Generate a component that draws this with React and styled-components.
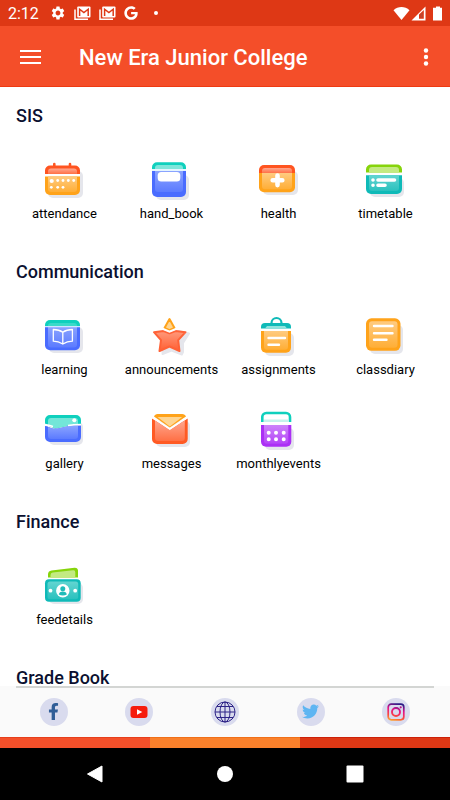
import styled, { createGlobalStyle } from "styled-components";

import { MdSettings } from "react-icons/md";
import { FaFacebookF, FaGoogle, FaTwitter } from "react-icons/fa";

const GlobalStyle = createGlobalStyle`
  * {
    box-sizing: border-box;
  }

  body {
    margin: 0;
    background: #fff;
    font-family: Roboto, "Noto Sans", sans-serif;
  }
`;

const Screen = styled.div`
  display: flex;
  flex-direction: column;
  height: 100vh;
  background: #fff;
`;

const StatusBar = styled.div`
  display: flex;
  align-items: center;
  justify-content: space-between;
  flex-shrink: 0;
  height: 26px;
  padding: 0 7px 0 8px;
  color: #fff;
  background: #de3815;
`;

const StatusGroup = styled.div`
  display: flex;
  align-items: center;
  gap: ${({ $gap }) => $gap}px;

  svg {
    display: block;
  }
`;

const Time = styled.span`
  font-size: 16px;
  line-height: 20px;
  margin-right: 3px;
  padding-top: 2px;
`;

const Dot = styled.span`
  width: 4px;
  height: 4px;
  margin-left: 8px;
  border-radius: 50%;
  background: #fff;
`;

const AppBar = styled.header`
  display: flex;
  align-items: center;
  flex-shrink: 0;
  height: 61px;
  padding: 2px 14px 0 16px;
  color: #fff;
  background: #f44e29;
  border-bottom: 1px solid #ee3a12;
`;

const IconButton = styled.button`
  display: flex;
  padding: 4px;
  color: inherit;
  background: none;
  border: none;
  cursor: pointer;
`;

const AppTitle = styled.h1`
  flex: 1;
  margin: 0 0 0 34px;
  padding-top: 2px;
  font-size: 22px;
  font-weight: 500;
  line-height: 28px;
`;

const Content = styled.main`
  flex: 1;
  min-height: 0;
  padding-top: 20px;
  overflow-y: auto;
  scrollbar-width: none;
`;

const Section = styled.section`
  margin-bottom: 40px;
`;

const SectionTitle = styled.h2`
  margin: 0 0 34px;
  padding: 0 16px;
  font-size: 18px;
  font-weight: 500;
  line-height: 18px;
  color: #0b1030;
`;

const Grid = styled.div`
  display: grid;
  grid-template-columns: repeat(4, minmax(0, 1fr));
  row-gap: 30px;
  padding: 0 11px;
`;

const Tile = styled.a`
  display: flex;
  flex-direction: column;
  align-items: center;
  gap: 2px;
  font-size: 13px;
  line-height: 18px;
  color: #000;
  text-decoration: none;
`;

const Footer = styled.footer`
  flex-shrink: 0;
  background: #fafafa;
`;

const Divider = styled.hr`
  height: 2px;
  margin: 0 16px;
  border: none;
  background: #d3d5d3;
`;

const SocialRow = styled.div`
  display: grid;
  grid-template-columns: repeat(5, 1fr);
  justify-items: center;
  align-items: center;
  height: 49px;
  padding: 0 11px 2px;
`;

const SocialLink = styled.a`
  display: flex;
  align-items: center;
  justify-content: center;
  width: 28px;
  height: 28px;
  border-radius: 50%;
  color: ${({ $color }) => $color};
  background: #d9dbee;
`;

const Stripes = styled.div`
  display: flex;
  height: 11px;
`;

const Stripe = styled.span`
  flex: 1;
  background: ${({ $color }) => $color};
  border-top: 1px solid ${({ $edge }) => $edge};
`;

const NavBar = styled.nav`
  display: grid;
  grid-template-columns: repeat(3, 1fr);
  justify-items: center;
  align-items: center;
  flex-shrink: 0;
  height: 52px;
  padding: 0 30px;
  color: #fff;
  background: #000;
`;

const Shadow = (props) => <rect rx="5" fill="#e5e6ec" {...props} />;

const Line = (props) => (
  <path fill="none" stroke="#fff" strokeWidth="2.4" strokeLinecap="round" {...props} />
);

const icons = {
  attendance: (
    <>
      <Shadow x="6" y="12" width="35" height="27" />
      <path d="M12.3 5v4M28 5v4" stroke="#ff5722" strokeWidth="2.6" strokeLinecap="round" />
      <path d="M3 15v-3.500a5 5 0 0 1 5-5h25a5 5 0 0 1 5 5V15z" fill="#ff5420" />
      <path d="M6 15v-2.500a3 3 0 0 1 3-3h23a3 3 0 0 1 3 3V15z" fill="url(#redSoft)" />
      <path d="M3 15h35v2.500H3z" fill="#fff" />
      <path d="M3 17.500h35V31a5 5 0 0 1-5 5H8a5 5 0 0 1-5-5z" fill="#ffa31a" />
      <path d="M6 17.500h29V30a3 3 0 0 1-3 3H9a3 3 0 0 1-3-3z" fill="url(#amberSoft)" />
      <g fill="#fff">
        <circle cx="9.700" cy="22" r="2.100" />
        <circle cx="15.700" cy="21.500" r="1.400" />
        <circle cx="21" cy="21.500" r="1.400" />
        <circle cx="26.300" cy="21.500" r="1.400" />
        <circle cx="31.700" cy="21.500" r="1.400" />
        <circle cx="9.300" cy="28.300" r="1.400" />
        <circle cx="15.700" cy="28.300" r="1.400" />
        <circle cx="21" cy="28.300" r="1.400" />
      </g>
    </>
  ),
  hand_book: (
    <>
      <Shadow x="7" y="16" width="33" height="25" />
      <path d="M3 10V8.300a5 5 0 0 1 5-5h24a5 5 0 0 1 5 5V10z" fill="#0fd0bd" />
      <path d="M6 10V9a3 3 0 0 1 3-3h22a3 3 0 0 1 3 3v1z" fill="#7ee6db" />
      <path d="M3 10h34v2H3z" fill="#e4f5ff" />
      <path d="M3 12h34v21a5 5 0 0 1-5 5H8a5 5 0 0 1-5-5z" fill="#4a6cff" />
      <path d="M6 12h28v18a3 3 0 0 1-3 3H9a3 3 0 0 1-3-3z" fill="url(#blueSoft)" />
      <rect x="8.700" y="13" width="22.600" height="9.600" rx="3.500" fill="#fff" />
    </>
  ),
  health: (
    <>
      <Shadow x="7" y="12" width="35" height="24" />
      <path d="M3 15v-4a5 5 0 0 1 5-5h26a5 5 0 0 1 5 5v4z" fill="#ff5420" />
      <path d="M3 14h36v14.300a5 5 0 0 1-5 5H8a5 5 0 0 1-5-5z" fill="#ffa31a" />
      <path d="M6 14v-2a3 3 0 0 1 3-3h24a3 3 0 0 1 3 3v2z" fill="url(#redSoft)" />
      <path d="M6 14h30v13.300a3 3 0 0 1-3 3H9a3 3 0 0 1-3-3z" fill="url(#amberSoft)" />
      <path d="M21.500 16.500v9.600M16.700 21.300h9.600" stroke="#fff" strokeWidth="4.600" strokeLinecap="round" />
    </>
  ),
  timetable: (
    <>
      <Shadow x="7" y="19" width="34" height="19" />
      <path d="M3 13.500v-3a5 5 0 0 1 5-5h26a5 5 0 0 1 5 5v3z" fill="#86d40b" />
      <path d="M6 13.500V11a3 3 0 0 1 3-3h24a3 3 0 0 1 3 3v2.500z" fill="#c3ea82" />
      <path d="M3 16.300h36V30a5 5 0 0 1-5 5H8a5 5 0 0 1-5-5z" fill="#0fbab8" />
      <path d="M6 16.300h30V29a3 3 0 0 1-3 3H9a3 3 0 0 1-3-3z" fill="url(#tealSoft)" />
      <Line d="M10 21h.01M10 26.300h.01M15 21h16.500M15 26.300h7" strokeWidth="3.600" />
    </>
  ),
  learning: (
    <>
      <Shadow x="7" y="12" width="34" height="26" />
      <path d="M3 11v-1a5 5 0 0 1 5-5h25a5 5 0 0 1 5 5v1z" fill="#0fd0bd" />
      <path d="M6 11a3 3 0 0 1 3-3h23a3 3 0 0 1 3 3z" fill="#8deee0" opacity=".35" />
      <path d="M3 11h35v19.300a5 5 0 0 1-5 5H8a5 5 0 0 1-5-5z" fill="#4a6cff" />
      <path d="M6 11.500h29v18a3 3 0 0 1-3 3H9a3 3 0 0 1-3-3z" fill="url(#blueSoft)" />
      <path d="M3 11h35v1.300H3z" fill="#cfe5ff" />
      <path
        d="M20.800 17.200C18 15.200 14.500 14.500 11.300 14.500v11.700c3.500 0 6.700 1 9.500 2.800 2.800-1.800 6-2.800 9.600-2.800V14.500c-3.300 0-6.800.7-9.600 2.700zV29"
        fill="none"
        stroke="#fff"
        strokeWidth="1.300"
        strokeLinejoin="round"
      />
    </>
  ),
  announcements: (
    <>
      <path
        d="M22.500 35.500 13.500 39 14 31 29 16 40 18.500 34 28v9l-1.200 2.500z"
        fill="#e5e6ec"
        stroke="#e5e6ec"
        strokeWidth="2"
        strokeLinejoin="round"
      />
      <path
        d="m20.500 4 5 9-5 2.200-5-2.200z"
        fill="#ffd591"
        stroke="#ffa31a"
        strokeWidth="2"
        strokeLinejoin="round"
      />
      <path
        d="M5 17.200 14.500 16l6 2.300 6-2.300 10 1.200-7.300 8 1.300 10.800-10-4.500-10 4.500L12 25.200z"
        fill="url(#starFill)"
        stroke="#ff6237"
        strokeWidth="2"
        strokeLinejoin="round"
      />
      <path d="m13 13.500 7.500 3.200 7.500-3.200" fill="none" stroke="#fff" strokeWidth="2" />
    </>
  ),
  assignments: (
    <>
      <Shadow x="9" y="18" width="29" height="23" />
      <path d="M15.500 8.500V8a5 5 0 0 1 10 0v.5" fill="none" stroke="#0fbab8" strokeWidth="2.200" />
      <path d="M5 13.500V12a4 4 0 0 1 4-4h22a4 4 0 0 1 4 4v1.500z" fill="#0fbab8" />
      <path d="M9 13.500 11 11h18l2 2.500z" fill="#8fe3dd" />
      <path d="M5 16h30v16.700a5 5 0 0 1-5 5H10a5 5 0 0 1-5-5z" fill="#ffa31a" />
      <path d="M8 16h24v15.700a3 3 0 0 1-3 3H11a3 3 0 0 1-3-3z" fill="url(#amberSoft)" />
      <Line d="M12.500 23h16.500M12.500 29.700h10.500" />
    </>
  ),
  classdiary: (
    <>
      <Shadow x="7" y="10" width="33" height="29" />
      <rect x="3" y="3.300" width="34.500" height="32.500" rx="5.500" fill="#ffa31a" />
      <rect x="6" y="6.300" width="28.500" height="26.500" rx="3" fill="url(#amberSoft)" />
      <Line d="M11 11h18.500M11 18.300h18.500M11 24.700h12.500" />
    </>
  ),
  gallery: (
    <>
      <Shadow x="7" y="13" width="34" height="23" />
      <path d="M3 14.500V11a5 5 0 0 1 5-5h26a5 5 0 0 1 5 5v4l-10 1-16 3.500-6-3z" fill="#0fd0bd" />
      <path d="M6 16v-4a3 3 0 0 1 3-3h24a3 3 0 0 1 3 3v3l-7 1-16 3.500z" fill="#73e6d8" />
      <path d="M3 17c3 0 5 2.300 9 2.800 5 .3 9-1.800 14-2.600 4-.7 8-.7 13-.7V28a5 5 0 0 1-5 5H8a5 5 0 0 1-5-5z" fill="#4a6cff" />
      <path d="M6 18c2 .8 4 1.700 6 1.800 5 .3 9-1.800 14-2.600 3-.5 6-.7 10-.7V27a3 3 0 0 1-3 3H9a3 3 0 0 1-3-3z" fill="url(#blueSoft)" />
      <path d="M3 15.800c3 .2 6 1 8 1.700M26 16.400c4-.8 8-1 13-1" fill="none" stroke="#fff" strokeWidth="1.500" />
      <circle cx="32.300" cy="11.300" r="2" fill="#fff" />
    </>
  ),
  messages: (
    <>
      <Shadow x="7" y="12" width="34" height="26" />
      <path d="M3 9.500 20.800 21 38.700 9.500V30a5 5 0 0 1-5 5H8a5 5 0 0 1-5-5z" fill="#ff5a24" />
      <path d="M6 11.500 20.800 21l15-9.500V29a3 3 0 0 1-3 3H9a3 3 0 0 1-3-3z" fill="url(#redSoft)" />
      <path d="M5 7.500C5.500 6 7 5 8.500 5h24.700c1.800 0 3.200 1 3.800 2.500L20.800 18.500z" fill="#ffa31a" />
      <path d="M8.500 8h24.700L20.800 17.500z" fill="#ffd591" />
      <path d="M3.500 8.300 20.800 20 38.200 8.300" fill="none" stroke="#fff" strokeWidth="1.700" />
    </>
  ),
  monthlyevents: (
    <>
      <Shadow x="9" y="19" width="29" height="22" />
      <path
        d="M6.300 13V8a4 4 0 0 1 4-4H30a4 4 0 0 1 4 4v5"
        fill="#fff"
        stroke="#0fd0bd"
        strokeWidth="2.600"
      />
      <path d="M8 10.500h24.500V13H8z" fill="#c4f3ec" />
      <path d="M5 16h30.300v16.700a5 5 0 0 1-5 5H10a5 5 0 0 1-5-5z" fill="#ab30f5" />
      <path d="M8 16h24.300v15.700a3 3 0 0 1-3 3H11a3 3 0 0 1-3-3z" fill="url(#purpleSoft)" />
      <Line d="M12.700 23.700h.01M20 23.700h.01M27.700 23.700h.01M12.700 30.300h.01M20 30.300h.01M27.700 30.300h.01" strokeWidth="4" />
    </>
  ),
  feedetails: (
    <>
      <Shadow x="7" y="18" width="34" height="21" />
      <path d="M6 12.500V9.500a4 4 0 0 1 3.500-4l23-2.800A3 3 0 0 1 36 5.500v7z" fill="#86d40b" />
      <path d="M8.500 12.500V10a2.500 2.500 0 0 1 2.200-2.400L31 5.200a2 2 0 0 1 2.300 2v5.300z" fill="#c3ea82" />
      <rect x="3" y="14.300" width="35.700" height="22.400" rx="4" fill="#0fbab8" />
      <rect x="5.500" y="16.500" width="30.700" height="17.700" rx="2.500" fill="url(#tealSoft)" />
      <circle cx="20.800" cy="25.700" r="6.700" fill="#fff" />
      <circle cx="20.800" cy="23.700" r="2.500" fill="#20bcb9" />
      <path d="M16.800 29.500c.3-2 1.700-3 4-3s3.700 1 4 3c-2.400 1.300-5.600 1.300-8 0z" fill="#20bcb9" />
      <circle cx="8.500" cy="25.700" r="1.900" fill="#fff" />
      <circle cx="33.200" cy="25.700" r="1.900" fill="#fff" />
    </>
  ),
};

const gradients = [
  ["redSoft", "#ffa78f", "#ff7045"],
  ["amberSoft", "#ffcb80", "#ffae36"],
  ["blueSoft", "#8ba4ff", "#5c7bff"],
  ["tealSoft", "#62d5d1", "#2bc1be"],
  ["purpleSoft", "#cd83fa", "#b445f7"],
  ["starFill", "#ff9a7c", "#ff5f33"],
];

const HiddenSvg = styled.svg`
  position: absolute;
`;

const GradientDefs = () => (
  <HiddenSvg width="0" height="0" aria-hidden="true">
    <defs>
      {gradients.map(([id, from, to]) => (
        <linearGradient key={id} id={id} x1="0" y1="0" x2="0" y2="1">
          <stop offset="0" stopColor={from} />
          <stop offset="1" stopColor={to} />
        </linearGradient>
      ))}
      <linearGradient id="insta" gradientUnits="userSpaceOnUse" x1="3" y1="18" x2="8" y2="0">
        <stop offset="0" stopColor="#ffb52e" />
        <stop offset="0.3" stopColor="#fb4a3c" />
        <stop offset="0.65" stopColor="#e6128a" />
        <stop offset="1" stopColor="#2b1a86" />
      </linearGradient>
    </defs>
  </HiddenSvg>
);

const MailStack = () => (
  <svg width="17" height="15" viewBox="0 0 17 15" fill="none">
    <path d="M1 3.500v9.800h13" stroke="#fff" strokeWidth="1.500" />
    <rect x="3.200" y="0.500" width="13.300" height="11" rx="1" fill="#fff" />
    <path d="M5.600 10V3.200l4.300 3.300 4.300-3.300V10" stroke="#de3815" strokeWidth="1.500" />
  </svg>
);

const sections = [
  { title: "SIS", items: ["attendance", "hand_book", "health", "timetable"] },
  {
    title: "Communication",
    items: [
      "learning",
      "announcements",
      "assignments",
      "classdiary",
      "gallery",
      "messages",
      "monthlyevents",
    ],
  },
  { title: "Finance", items: ["feedetails"] },
  { title: "Grade Book", items: [] },
];

const socials = [
  { name: "Facebook", color: "#2f5d97", icon: <FaFacebookF size={17} /> },
  {
    name: "YouTube",
    color: "#f61c0d",
    icon: (
      <svg width="18" height="14" viewBox="0 0 18 14">
        <rect x="0.500" y="1" width="17" height="12" rx="3" fill="currentColor" />
        <path d="M7 4.200v5.600L12.300 7z" fill="#fff" />
      </svg>
    ),
  },
  {
    name: "Website",
    color: "#2d2387",
    icon: (
      <svg width="22" height="22" viewBox="0 0 22 22" fill="none" stroke="currentColor">
        <circle cx="11" cy="11" r="10" />
        <ellipse cx="11" cy="11" rx="5" ry="10" />
        <path d="M11 1v20M1 11h20M2.800 5.500h16.400M2.800 16.500h16.400" />
      </svg>
    ),
  },
  { name: "Twitter", color: "#5eb5f2", icon: <FaTwitter size={17} /> },
  {
    name: "Instagram",
    color: "#d8127d",
    icon: (
      <svg width="18" height="18" viewBox="0 0 18 18" fill="none" stroke="url(#insta)">
        <rect x="1.200" y="1.200" width="15.600" height="15.600" rx="3" strokeWidth="1.700" />
        <circle cx="9" cy="9" r="4" strokeWidth="1.900" />
        <circle cx="13.700" cy="4.300" r="1.100" fill="#b51a86" stroke="none" />
      </svg>
    ),
  },
];

const App = () => {
  return (
    <Screen>
      <GlobalStyle />
      <GradientDefs />
      <StatusBar>
        <StatusGroup $gap={8}>
          <Time>2:12</Time>
          <MdSettings size={16} />
          <MailStack />
          <MailStack />
          <FaGoogle size={14} />
          <Dot />
        </StatusGroup>
        <StatusGroup $gap={1}>
          <svg width="17" height="15" viewBox="0 0 17 15">
            <path d="M.5 4.200C5-.2 12-.2 16.500 4.200L8.500 14z" fill="#fff" />
          </svg>
          <svg width="15" height="15" viewBox="0 0 15 15">
            <path d="M14.500.5v14H.5z" fill="#fff" />
            <path d="M8 8.500 12.800 4v8.800H8z" fill="#de3815" />
            <path d="M9.500 8.500 11.500 6.500v5h-2z" fill="#b64a38" />
          </svg>
          <svg width="16" height="15" viewBox="0 0 16 15">
            <path d="M7 1.800h2V.5h4v1.300h2V14.500H6V1.800z" fill="#fff" />
          </svg>
        </StatusGroup>
      </StatusBar>
      <AppBar>
        <IconButton aria-label="Open menu">
          <svg width="21" height="16" viewBox="0 0 21 16">
            <path d="M0 2h21M0 8h21M0 14h21" stroke="#fff" strokeWidth="2" />
          </svg>
        </IconButton>
        <AppTitle>New Era Junior College</AppTitle>
        <IconButton aria-label="More options">
          <svg width="16" height="20" viewBox="0 0 16 20" fill="#fff">
            <circle cx="10" cy="3.500" r="2.200" />
            <circle cx="10" cy="10" r="2.200" />
            <circle cx="10" cy="16.500" r="2.200" />
          </svg>
        </IconButton>
      </AppBar>
      <Content>
        {sections.map(({ title, items }) => (
          <Section key={title}>
            <SectionTitle>{title}</SectionTitle>
            <Grid>
              {items.map((item) => (
                <Tile key={item} href={`#${item}`}>
                  <svg width="44" height="44" viewBox="1 0 44 44" aria-hidden="true">
                    {icons[item]}
                  </svg>
                  {item}
                </Tile>
              ))}
            </Grid>
          </Section>
        ))}
      </Content>
      <Footer>
        <Divider />
        <SocialRow>
          {socials.map(({ name, color, icon }) => (
            <SocialLink key={name} href={`#${name}`} aria-label={name} $color={color}>
              {icon}
            </SocialLink>
          ))}
        </SocialRow>
        <Stripes>
          <Stripe $color="#f4502a" $edge="#e63f1c" />
          <Stripe $color="#fa812b" $edge="#f07019" />
          <Stripe $color="#de3815" $edge="#cc2108" />
        </Stripes>
      </Footer>
      <NavBar>
        <IconButton aria-label="Back">
          <svg width="18" height="18" viewBox="0 0 18 18">
            <path d="M16 1v16L1.500 9z" fill="#fff" stroke="#fff" strokeLinejoin="round" />
          </svg>
        </IconButton>
        <IconButton aria-label="Home">
          <svg width="18" height="18" viewBox="0 0 18 18">
            <circle cx="9" cy="9" r="8" fill="#fff" />
          </svg>
        </IconButton>
        <IconButton aria-label="Recent apps">
          <svg width="18" height="18" viewBox="0 0 18 18">
            <rect x="0.500" y="0.500" width="17" height="17" rx="1" fill="#fff" />
          </svg>
        </IconButton>
      </NavBar>
    </Screen>
  );
};

export default App;
